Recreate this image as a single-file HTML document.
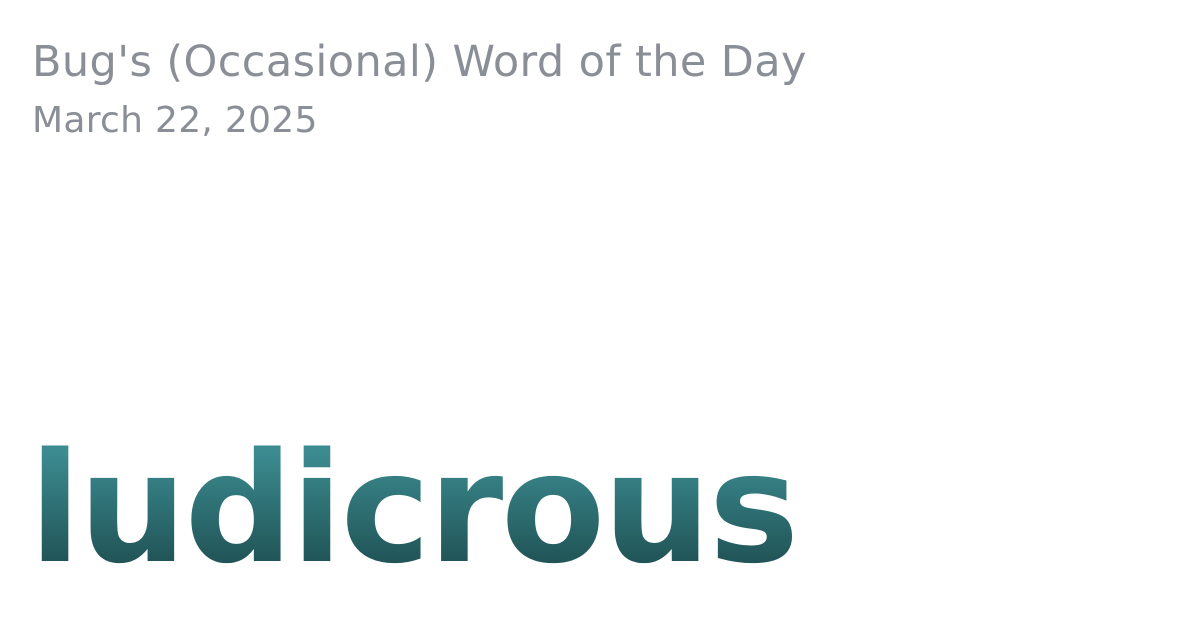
<!DOCTYPE html>
<html><head><meta charset="utf-8"><style>
html,body{margin:0;padding:0;background:#fff;width:1200px;height:630px;overflow:hidden;position:relative}
.t{position:absolute;left:32px;font-family:"DejaVu Sans","Liberation Sans",sans-serif;color:#8a8e97;white-space:nowrap}
#a{top:37px;font-size:43px;letter-spacing:0.4px}
#b{top:100px;font-size:36px;letter-spacing:0.3px}
#w{position:absolute;left:29px;top:409px;font-family:"DejaVu Sans","Liberation Sans",sans-serif;font-weight:bold;font-size:152px;line-height:200px;letter-spacing:-2.4px;white-space:nowrap;
background:linear-gradient(#3b8b90 22%,#1e4f51 82%);-webkit-background-clip:text;background-clip:text;color:transparent}
</style></head><body>
<div class="t" id="a">Bug's (Occasional) Word of the Day</div>
<div class="t" id="b">March 22, 2025</div>
<div id="w">ludicrous</div>
</body></html>
